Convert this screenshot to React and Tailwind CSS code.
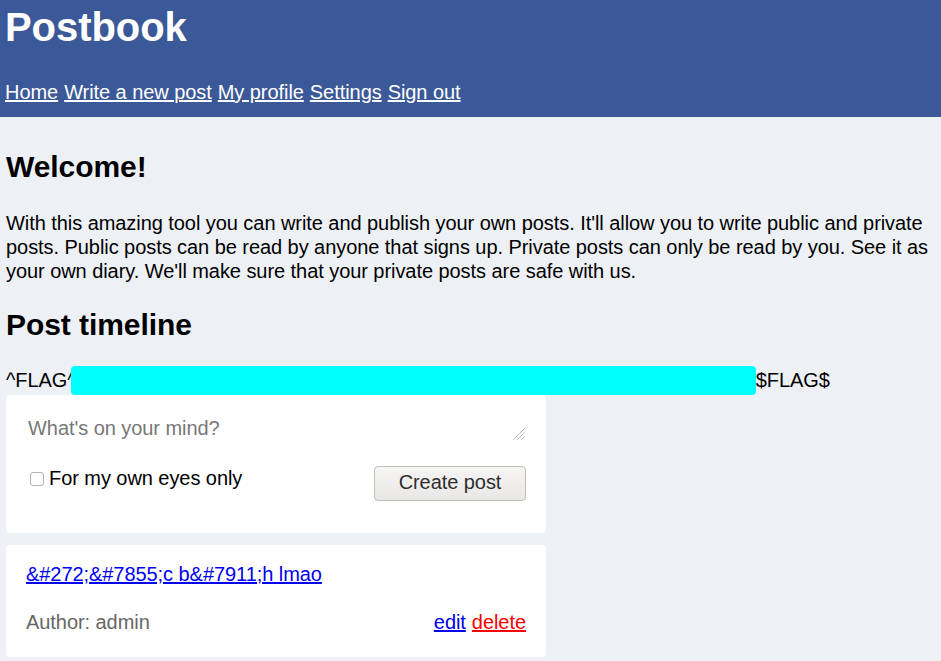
export default function App() {
  return (
    <div className="min-h-[661px] bg-[#edf0f5] text-black text-[20px] tracking-[-0.06px]" style={{ fontFamily: '"Liberation Sans", Arial, sans-serif' }}>
      <header className="bg-[#3b5998] px-[5px] pb-[13px] text-white">
        <h1 className="m-0 pt-[2px] text-[40px] font-bold leading-[50px]">Postbook</h1>
        <nav className="mt-[29px] flex gap-[6px] leading-[23px]">
          <a href="#" className="underline">Home</a>
          <a href="#" className="underline">Write a new post</a>
          <a href="#" className="underline">My profile</a>
          <a href="#" className="underline">Settings</a>
          <a href="#" className="underline">Sign out</a>
        </nav>
      </header>
      <main className="px-[6px]">
        <h2 className="mt-[34px] mb-[28px] text-[30px] font-bold leading-[32px]">Welcome!</h2>
        <p className="leading-[24px]">
          With this amazing tool you can write and publish your own posts. It'll allow you to write public and private posts. Public posts can be read by anyone that signs up. Private posts can only be read by you. See it as your own diary. We'll make sure that your private posts are safe with us.
        </p>
        <h2 className="mt-[26px] mb-[25px] text-[30px] font-bold leading-[32px]">Post timeline</h2>
        <div className="flex items-center leading-[23px]">
          <span>^FLAG^</span>
          <span className="-ml-[6px] inline-block h-[29px] w-[685px] rounded-[4px] bg-[#00ffff]"></span>
          <span>$FLAG$</span>
        </div>
        <div className="w-[540px] rounded-[4px] bg-white px-[20px] pt-[18px] pb-[32px]">
          <div className="relative h-[27px] pl-[2px] pt-[4px] leading-[23px] text-[#777]">
            What's on your mind?
            <svg className="absolute right-[1px] bottom-0" width="12" height="12" viewBox="0 0 12 12">
              <path d="M11.5 0.5 L0.5 11.5 M11.5 4.5 L4.5 11.5 M11.5 8.5 L8.5 11.5" stroke="#888" strokeWidth="1" strokeDasharray="1.2 0.6" />
            </svg>
          </div>
          <div className="mt-[26px] flex items-start justify-between">
            <label className="mt-[1px] flex items-center leading-[23px]">
              <span className="ml-[4px] mr-[5px] inline-block h-[14px] w-[14px] rounded-[3px] border border-[#b5b1ab] bg-white"></span>
              For my own eyes only
            </label>
            <button className="h-[35px] w-[152px] rounded-[4px] border border-[#c2beb8] bg-[linear-gradient(#f6f5f4,#e8e7e5)] pb-[4px] text-[#2e2e2e]">Create post</button>
          </div>
        </div>
        <div className="mt-[12px] w-[540px] rounded-[4px] bg-white px-[20px] pt-[18px] pb-[23px] leading-[23px]">
          <a href="#" className="text-[#0000ee] underline">&amp;#272;&amp;#7855;c b&amp;#7911;h lmao</a>
          <div className="mt-[25px] flex justify-between">
            <span className="text-[#666]">Author: admin</span>
            <span className="flex gap-[6px]">
              <a href="#" className="text-[#0000ee] underline">edit</a>
              <a href="#" className="text-[#ff0000] underline">delete</a>
            </span>
          </div>
        </div>
      </main>
    </div>
  );
}
